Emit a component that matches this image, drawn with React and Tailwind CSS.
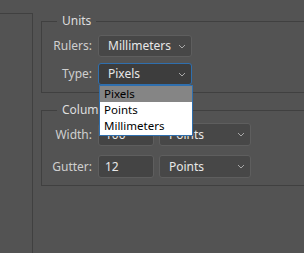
import React from 'react'

function Chevron() {
    return (
        <svg width="8" height="5" viewBox="0 0 8 5" className="shrink-0">
            <polyline
                points="1,1 4,4 7,1"
                fill="none"
                stroke="#a8a8a8"
                strokeWidth="1"
            />
        </svg>
    )
}

function Select({ value, className = '', focused = false, children }) {
    return (
        <div
            className={`relative flex items-center justify-between rounded-[3px] border pl-[9px] pr-[5px] text-[#e8e8e8] ${
                focused
                    ? 'border-[#2f6fae] bg-[#3d3d3d]'
                    : 'border-[#5e5e5e] bg-[#474747]'
            } ${className}`}
        >
            <span className="leading-none">{value}</span>
            <Chevron />
            {children}
        </div>
    )
}

function Row({ label, className = '', children }) {
    return (
        <div className={`flex items-center ${className}`}>
            <span className="w-[50px] text-right text-[#cfcfcf]">
                {label}
            </span>
            <div className="ml-[6px] flex gap-[5px]">{children}</div>
        </div>
    )
}

export default function App() {
    const typeOptions = ['Pixels', 'Points', 'Millimeters']

    return (
        <div className="flex h-[253px] w-[304px] overflow-hidden bg-[#535353] font-['Noto_Sans',sans-serif] text-[12px]">
            <div className="mt-[13px] w-[33px] shrink-0 border-t border-r border-[#404040]" />

            <div className="flex-1 pl-[8px] pt-[13px]">
                <fieldset className="border-y border-l border-[#404040] pb-[7px]">
                    <legend className="ml-[15px] px-[5px] leading-[16px] text-[#dedede]">
                        Units
                    </legend>

                    <Row label="Rulers:" className="mt-[6px]">
                        <Select
                            value="Millimeters"
                            className="h-[22px] w-[94px]"
                        />
                    </Row>

                    <Row label="Type:" className="mt-[6px]">
                        <Select
                            value="Pixels"
                            focused
                            className="z-10 h-[22px] w-[94px]"
                        >
                            <ul className="absolute left-0 top-[21px] w-[94px] border border-[#2f6fae] bg-white pb-[1px] text-[11.5px] text-black">
                                {typeOptions.map((option, index) => (
                                    <li
                                        key={option}
                                        className={`h-[16px] px-[4px] leading-[16px] ${
                                            index === 0
                                                ? 'bg-[#858585]'
                                                : ''
                                        }`}
                                    >
                                        {option}
                                    </li>
                                ))}
                            </ul>
                        </Select>
                    </Row>
                </fieldset>

                <fieldset className="mt-[9px] border-y border-l border-[#404040] pb-[7px]">
                    <legend className="ml-[15px] px-[5px] leading-[16px] text-[#dedede]">
                        Columns
                    </legend>

                    <Row label="Width:" className="mt-[5px]">
                        <div className="flex h-[23px] w-[56px] items-center rounded-[3px] border border-[#5e5e5e] bg-[#444444] pl-[6px] text-[#e8e8e8]">
                            100
                        </div>
                        <Select
                            value="Points"
                            className="h-[23px] w-[92px]"
                        />
                    </Row>

                    <Row label="Gutter:" className="mt-[9px]">
                        <div className="flex h-[23px] w-[56px] items-center rounded-[3px] border border-[#5e5e5e] bg-[#444444] pl-[6px] text-[#e8e8e8]">
                            12
                        </div>
                        <Select
                            value="Points"
                            className="h-[23px] w-[92px]"
                        />
                    </Row>
                </fieldset>
            </div>
        </div>
    )
}
